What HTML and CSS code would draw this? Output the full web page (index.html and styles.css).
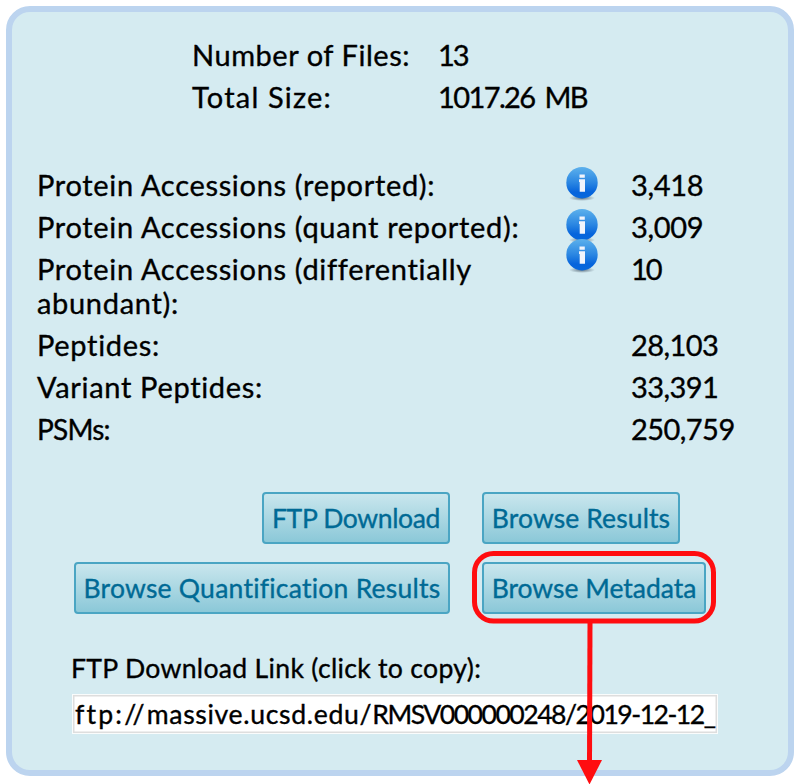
FILE: index.html
```html
<!DOCTYPE html>
<html lang="en">
<head>
<meta charset="utf-8">
<title>Dataset summary</title>
<link rel="stylesheet" href="styles.css">
</head>
<body>
<svg class="defs" width="0" height="0" aria-hidden="true">
  <defs>
    <linearGradient id="info-fill" x1="0" y1="0" x2="0" y2="1">
      <stop offset="0" stop-color="#5db1ec"/>
      <stop offset=".5" stop-color="#2a86e2"/>
      <stop offset=".8" stop-color="#0664dc"/>
      <stop offset="1" stop-color="#0868dc"/>
    </linearGradient>
    <radialGradient id="info-shadow">
      <stop offset="0" stop-color="#456" stop-opacity=".8"/>
      <stop offset="1" stop-color="#456" stop-opacity="0"/>
    </radialGradient>
    <symbol id="info" viewBox="0 0 32 36">
      <ellipse cx="16" cy="31" rx="13" ry="3" fill="url(#info-shadow)"/>
      <circle cx="16" cy="15.700" r="15.700" fill="url(#info-fill)"/>
      <path d="M13.500 7.500h5.300v3.200h-5.300zM13 12.300h6v12.500h-5.300v-9.800H13z" fill="#f1f4fc"/>
    </symbol>
  </defs>
</svg>
<main class="panel">
  <dl class="files">
    <dt class="s-files">Number of Files:</dt><dd class="s-13">13</dd>
    <dt class="s-total">Total Size:</dt><dd class="s-size">1017.26 MB</dd>
  </dl>
  <div class="stats">
    <div class="row"><span class="label">Protein Accessions (reported):</span><svg class="icon"><use href="#info"/></svg><span class="value">3,418</span></div>
    <div class="row"><span class="label">Protein Accessions (quant reported):</span><svg class="icon"><use href="#info"/></svg><span class="value">3,009</span></div>
    <div class="row"><span class="label">Protein Accessions (differentially<br>abundant):</span><svg class="icon raised"><use href="#info"/></svg><span class="value s-ten">10</span></div>
    <div class="row"><span class="label">Peptides:</span><span></span><span class="value long">28,103</span></div>
    <div class="row"><span class="label">Variant Peptides:</span><span></span><span class="value long">33,391</span></div>
    <div class="row"><span class="label s-psm">PSMs:</span><span></span><span class="value long">250,759</span></div>
  </div>
  <div class="buttons">
    <button class="b-ftp">FTP Download</button><button class="b-results">Browse Results</button>
    <button class="b-quant">Browse Quantification Results</button><div class="marked"><button class="b-meta">Browse Metadata</button>
      <svg class="callout" width="244" height="236" viewBox="0 0 244 236">
        <rect x="2.500" y="2.500" width="239" height="67.500" rx="19" fill="none" stroke="#ff0d10" stroke-width="5"/>
        <path d="M118 71L117.500 210" stroke="#ff0d10" stroke-width="5"/>
        <path d="M105 209H130L117.500 233.500Z" fill="#ff0d10"/>
      </svg>
    </div>
  </div>
  <div class="link-label">FTP Download Link (click to copy):</div>
  <div class="link"><span class="scheme">ftp://</span><span class="host">massive.ucsd.edu/</span><span class="path">RMSV000000248/2019-12-12_</span></div>
</main>
</body>
</html>
```
FILE: styles.css
```css
* { box-sizing: border-box; }
body {
  margin: 0;
  padding: 6px 8px 8px 6px;
  background: #fff;
  color: #000;
  font: 29px/34px Lato, "Trebuchet MS", sans-serif;
  -webkit-text-stroke: .35px;
}
.defs { position: absolute; }
.panel {
  height: 770px;
  border: 6px solid #bcd4ef;
  border-radius: 24px;
  background: #d5ebf1;
  padding: 26px 24px 0 25px;
}
.files {
  margin: 0 0 54px 155px;
  display: grid;
  grid-template-columns: 246px 1fr;
  row-gap: 8px;
}
dd { margin: 0; }
.stats { display: grid; row-gap: 8px; }
.row { display: grid; grid-template-columns: 529px 65px 1fr; align-items: start; }
.label { letter-spacing: .68px; white-space: nowrap; }
.value { letter-spacing: -.3px; }
.long { letter-spacing: -.55px; }
.s-files { letter-spacing: .55px; }
.s-13 { letter-spacing: -2px; }
.s-total { letter-spacing: 1.200px; }
.s-size { letter-spacing: -1.600px; word-spacing: 4px; }
.s-ten { letter-spacing: -2px; }
.s-psm { font-size: 28px; letter-spacing: -.8px; }
.icon { width: 32px; height: 36px; margin: -1px 0 -6px; }
.raised { margin-top: -13px; }
.buttons {
  margin: 46px 0 0 37px;
  display: grid;
  grid-template-columns: 376px 224px;
  gap: 18px 32px;
}
button {
  height: 52px;
  border: 2px solid #4aa5c3;
  border-radius: 4px;
  background: linear-gradient(#c9e6ed, #8bc8d8);
  color: #006a95;
  padding: 0;
  font: 26.500px/46px Lato, "Trebuchet MS", sans-serif;
  -webkit-text-stroke: .35px;
  white-space: nowrap;
  text-align: center;
}
.b-ftp { width: 188px; justify-self: end; letter-spacing: -.35px; }
.b-results { width: 198px; letter-spacing: .1px; }
.b-quant { letter-spacing: .24px; }
.b-meta { width: 224px; letter-spacing: -.02px; }
.marked { position: relative; height: 52px; }
.callout { position: absolute; left: -10.500px; top: -11.500px; pointer-events: none; }
.link-label {
  margin: 37px 0 0 34px;
  font-size: 26.600px;
  letter-spacing: .3px;
}
.link {
  width: 646px;
  height: 40px;
  margin: 9px 0 0 35px;
  padding: 0 2px;
  border: 1px solid #fafcfc;
  box-shadow: inset 0 0 0 1.500px #dedede;
  background: #fff;
  font-size: 26.600px;
  line-height: 39px;
  white-space: nowrap;
  overflow: hidden;
}
.scheme { letter-spacing: 2.200px; }
.host { letter-spacing: .67px; }
.path { letter-spacing: -1.500px; }
```
